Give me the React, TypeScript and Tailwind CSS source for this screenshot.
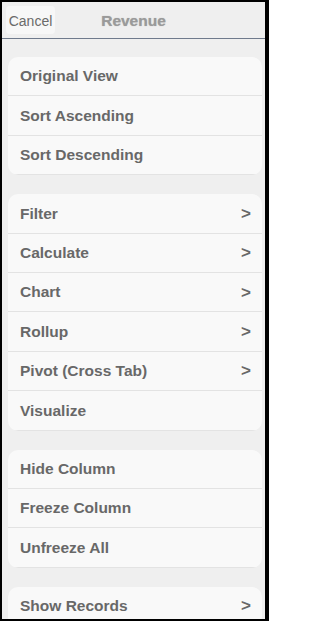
import React from "react";

const groups: { label: string; arrow?: boolean }[][] = [
  [{ label: "Original View" }, { label: "Sort Ascending" }, { label: "Sort Descending" }],
  [
    { label: "Filter", arrow: true },
    { label: "Calculate", arrow: true },
    { label: "Chart", arrow: true },
    { label: "Rollup", arrow: true },
    { label: "Pivot (Cross Tab)", arrow: true },
    { label: "Visualize" },
  ],
  [{ label: "Hide Column" }, { label: "Freeze Column" }, { label: "Unfreeze All" }],
  [{ label: "Show Records", arrow: true }],
];

export default function App() {
  return (
    <div className="w-[269px] h-[621px] bg-black pt-[2px] pl-[2px] pr-[4px] pb-[2px] font-['Liberation_Sans',Arial,sans-serif]">
      <div className="w-full h-full bg-[#efefef] overflow-hidden flex flex-col">
        <div className="relative h-[37px] shrink-0 border-b border-[#6f7a8c] flex items-start">
          <div className="mt-[4px] ml-[4px] w-[49px] h-[28px] rounded-[4px] bg-[#f7f7f7] flex items-center justify-center text-[14px] text-[#6a6a6a] pt-[2px]">
            Cancel
          </div>
          <div className="absolute left-0 right-0 top-[10px] text-center text-[15.5px] font-bold text-[#9a9a9a] leading-[18px] [text-shadow:0_0_1px_#b0b0b0]">
            Revenue
          </div>
        </div>
        <div className="flex flex-col gap-[19px] pt-[18px] pl-[6px] pr-[3px]">
          {groups.map((g, gi) => (
            <div key={gi} className="bg-[#f9f9f9] rounded-[10px] overflow-hidden">
              {g.map((r) => (
                <div
                  key={r.label}
                  className="h-[39.4px] border-b border-[#e3e3e3] flex items-center justify-between pl-[12px] pr-[11px]"
                >
                  <span className="text-[15.5px] font-bold text-[#686868] leading-none">{r.label}</span>
                  {r.arrow && (
                    <span className="text-[17px] font-bold text-[#686868] leading-none">&gt;</span>
                  )}
                </div>
              ))}
            </div>
          ))}
        </div>
      </div>
    </div>
  );
}
